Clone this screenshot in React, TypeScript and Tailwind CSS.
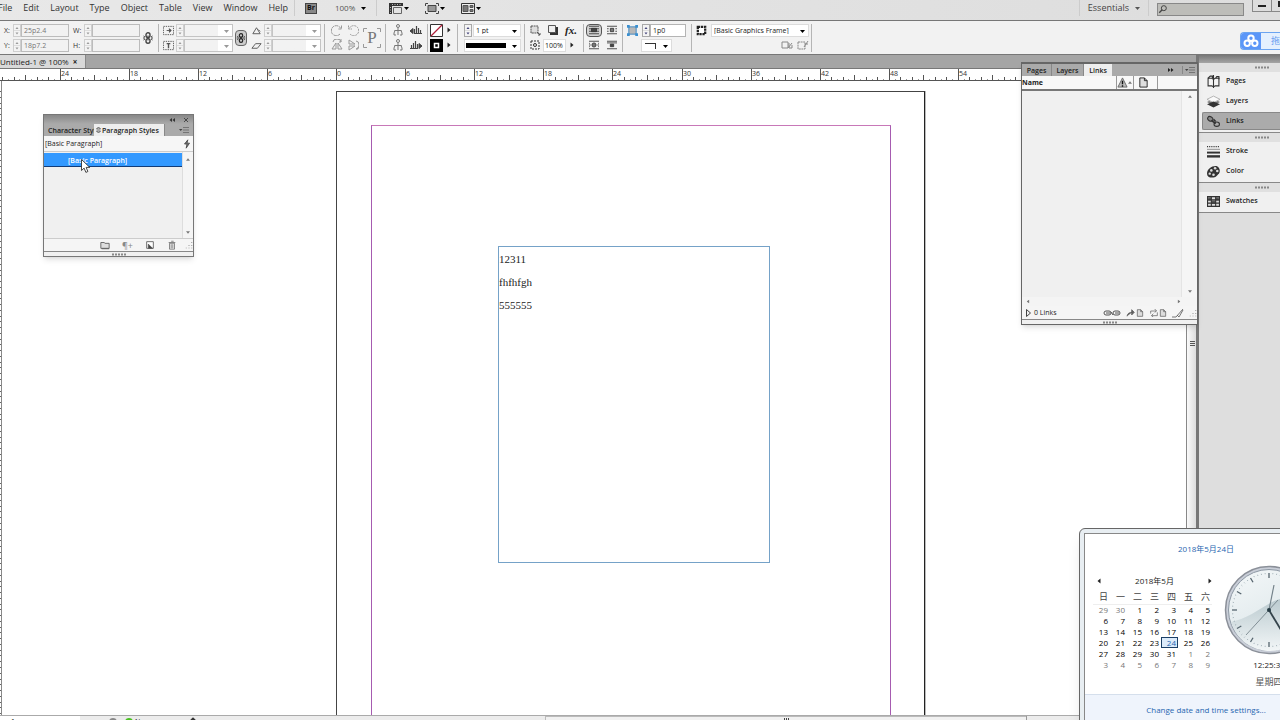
import React from "react";

const ui = "font-['Open_Sans','Noto_Sans_CJK_SC',sans-serif]";

type IconProps = { className?: string; children: React.ReactNode };

const Icon: React.FC<IconProps> = ({ className = "size-3", children }) => (
  <svg viewBox="0 0 12 12" fill="none" stroke="currentColor" className={`shrink-0 ${className}`} aria-hidden="true">
    {children}
  </svg>
);

const Caret = ({ className = "text-black" }: { className?: string }) => (
  <svg viewBox="0 0 5 3" className={`h-[3px] w-[5px] shrink-0 ${className}`} fill="currentColor" aria-hidden="true">
    <path d="M0 0h5L2.500 3z" />
  </svg>
);

const RightCaret = () => (
  <svg viewBox="0 0 4 6" className="h-1.5 w-1 shrink-0" fill="#222" aria-hidden="true">
    <path d="M0.5 0.5v5L3.5 3z" />
  </svg>
);

const Spinner = ({ label, active }: { label: string; active?: boolean }) => (
  <button
    type="button"
    aria-label={label}
    className={`flex h-[13px] w-2 shrink-0 items-center justify-center border bg-[#f4f4f4] ${
      active ? "border-[#a8a8a8] text-[#44447a]" : "border-[#cfcfcf] text-[#999]"
    }`}
  >
    <svg viewBox="0 0 6 11" className="h-[11px] w-1.5" fill="currentColor">
      <path d="M1.5 4L3 2l1.5 2zM1.5 7.5h3L3 9.5z" />
      <path d="M0 5.5h6" stroke="#ccc" strokeWidth=".6" />
    </svg>
  </button>
);

type FieldProps = { label: string; value?: string; className?: string; active?: boolean };

const Field = ({ label, value = "", className = "w-12", active }: FieldProps) => (
  <input
    aria-label={label}
    defaultValue={value}
    className={`h-[13px] min-w-0 shrink-0 border px-0.5 text-[7px] leading-none ${
      active ? "border-[#b4b4b4] bg-white text-[#222]" : "border-[#bcbcbc] bg-[#f2f2f2] text-[#777]"
    } ${className}`}
  />
);

type ComboProps = { label: string; options?: string[]; className?: string; dim?: boolean; children?: React.ReactNode };

const Combo: React.FC<ComboProps> = ({ label, options = [""], className = "w-12", dim, children }) => (
  <div className={`relative h-[13px] shrink-0 ${className}`}>
    <select
      aria-label={label}
      className={`block size-full appearance-none border px-0.5 text-[7px] leading-none ${
        dim ? "border-[#c4c4c4] bg-linear-to-r from-[#f2f2f2] from-70% to-white to-70%" : "border-[#dcdcdc] bg-white text-[#222]"
      }`}
    >
      {options.map((o) => (
        <option key={o}>{o}</option>
      ))}
    </select>
    {children}
    <span className="pointer-events-none absolute inset-y-0 right-1 flex items-center pt-0.5">
      <Caret className={dim ? "text-[#999]" : "text-black"} />
    </span>
  </div>
);

const Section: React.FC<{ className: string; children: React.ReactNode }> = ({ className, children }) => (
  <div className={`flex h-7 shrink-0 items-center border-r border-[#b5b5b5] ${className}`}>{children}</div>
);

const Stack: React.FC<{ className?: string; children: React.ReactNode }> = ({ className = "", children }) => (
  <div className={`flex flex-col gap-0.5 ${className}`}>{children}</div>
);

const Row: React.FC<{ className?: string; children: React.ReactNode }> = ({ className = "", children }) => (
  <div className={`flex h-[13px] items-center ${className}`}>{children}</div>
);

const ToolButton: React.FC<{ label: string; className?: string; children: React.ReactNode }> = ({
  label,
  className = "text-[#555]",
  children,
}) => (
  <button type="button" aria-label={label} className={`flex shrink-0 items-center justify-center ${className}`}>
    {children}
  </button>
);

const Grip = () => (
  <svg viewBox="0 0 14 3" className="h-[3px] w-3.5" aria-hidden="true">
    <path d="M0 1.5h14" stroke="#888" strokeWidth="2" strokeDasharray="2 1" />
  </svg>
);

const MenuLines = () => (
  <svg viewBox="0 0 10 8" className="h-2 w-2.5" fill="#444" aria-hidden="true">
    <path d="M0 3h3.5L1.7 5z" />
    <path d="M4 1.5h6M4 4h6M4 6.5h6" stroke="#666" strokeWidth=".8" />
  </svg>
);

const ChainIcon = ({ className }: { className?: string }) => (
  <Icon className={className}>
    <rect x="4" y="0.8" width="4" height="4.6" rx="2" strokeWidth="1.4" />
    <rect x="4" y="6.6" width="4" height="4.6" rx="2" strokeWidth="1.4" />
    <path d="M6 3.5v5M1.5 4l1.5 1M10.5 4L9 5M1 6h2M11 6H9M1.5 8L3 7M10.5 8L9 7" />
  </Icon>
);

const DocIcon = ({ className }: { className?: string }) => (
  <Icon className={className}>
    <path d="M2 1h5l3 3v7H2z" fill="#ddd" />
    <path d="M7 1v3h3" />
  </Icon>
);

const menus = ["File", "Edit", "Layout", "Type", "Object", "Table", "View", "Window", "Help"];

const MenuBar = () => (
  <header className="flex h-[21px] shrink-0 items-start justify-between border-b border-[#777] bg-linear-to-r from-[#e8e8e8] to-[#dddddd] text-[9px] leading-4 text-[#333]">
    <div className="flex items-center">
      <nav className="-ml-0.5 flex gap-[11px]">
        {menus.map((m) => (
          <button key={m} type="button">
            {m}
          </button>
        ))}
      </nav>
      <div className="ml-1.5 flex h-4 items-center gap-2.5 border-l border-[#ccc] pl-2.5">
        <button
          type="button"
          className="flex h-[11px] w-3 items-center justify-center border border-[#444] bg-[#888] text-[7px] font-bold text-[#111]"
        >
          Br
        </button>
        <button type="button" className="ml-2 flex items-center gap-1.5 text-[8px] text-[#555]">
          100% <Caret />
        </button>
      </div>
      <div className="ml-2.5 flex h-4 items-center gap-4 border-l border-[#ccc] pl-3 text-[#333]">
        <ToolButton label="View Options" className="gap-px">
          <svg viewBox="0 0 14 11" className="h-[11px] w-3.5">
            <path d="M0 0h14v3H3v8H0z" fill="#333" />
            <path d="M3 1.500h10M1.500 4v7" stroke="#bbb" strokeDasharray="1 1.500" />
            <path d="M4.500 4.500h8v6h-8z" fill="#e4e4e4" stroke="#666" />
          </svg>
          <Caret />
        </ToolButton>
        <ToolButton label="Screen Mode" className="gap-px">
          <svg viewBox="0 0 14 11" className="h-[11px] w-3.5" fill="none" stroke="#444">
            <path d="M3 2.500h8v6H3z" fill="#999" />
            <path d="M.5 3V.5H3M11 .5h2.500V3M.5 8v2.500H3M11 10.500h2.500V8" />
          </svg>
          <Caret />
        </ToolButton>
        <ToolButton label="Arrange Documents" className="gap-px">
          <svg viewBox="0 0 14 11" className="h-[11px] w-3.5" stroke="#333">
            <path d="M.5.5h13v10H.5z" fill="#eee" />
            <path d="M2 2.500h5v6H2zM9 2.500h3v2H9zM9 6.500h3v2H9z" fill="#777" stroke="#555" />
          </svg>
          <Caret />
        </ToolButton>
      </div>
    </div>
    <div className="flex items-center">
      <button type="button" className="flex h-4 items-center gap-1.5 border-x border-[#ccc] px-2 text-[#444]">
        Essentials <Caret className="text-[#555]" />
      </button>
      <label className="mt-0.5 ml-2 flex h-[13px] w-[87px] items-center border border-[#888] bg-[#bdbdb9] text-[#444]">
        <Icon className="size-2.5">
          <circle cx="7" cy="5" r="3" strokeWidth="1.2" />
          <path d="M5 7L1.500 10.500" strokeWidth="1.600" />
        </Icon>
        <input aria-label="Search" className="w-full min-w-0" />
      </label>
      <div className="-mt-2 ml-2 flex text-[#222]">
        <button type="button" aria-label="Minimize" className="flex h-4 w-5 items-end justify-center border border-[#888] pb-1">
          <span className="h-0.5 w-2 bg-[#222]" />
        </button>
        <button type="button" aria-label="Maximize" className="flex h-4 w-2 items-end border-b border-[#888] pb-1 pl-1.5">
          <span className="h-1.5 w-0.5 bg-[#222]" />
        </button>
      </div>
    </div>
  </header>
);

const Person = () => (
  <Icon className="size-3">
    <circle cx="6" cy="2" r="1.500" />
    <path d="M6 4v7M2.500 6.500h7M2 9v2h2M10 9v2H8M3 6.500L2 9M9 6.500l1 2.500" />
  </Icon>
);

const Blocks = ({ flip }: { flip?: boolean }) => (
  <Icon className={flip ? "size-3 -scale-x-100" : "size-3"}>
    <path d="M0 7l3-2.500v5z" fill="currentColor" />
    <path d="M4.500 5v5M6.500 2v8M8.500 4v6M10.500 6v4M4 9.500h8" strokeWidth="1.200" />
  </Icon>
);

const ControlBar = () => (
  <section className="flex h-[34px] shrink-0 items-center justify-between border-b border-[#777] bg-[#f2f2f2] text-[7px] leading-none text-[#333]">
    <div className="flex items-center">
      <Section className="w-[159px] pl-1">
        <Stack>
          {[
            ["X:", "25p2.4", "W:"],
            ["Y:", "18p7.2", "H:"],
          ].map(([a, v, b]) => (
            <Row key={a}>
              <span className="w-[9px]">{a}</span>
              <Spinner label={`${a} step`} />
              <Field label={a} value={v} />
              <span className="ml-1 w-[11px]">{b}</span>
              <Spinner label={`${b} step`} />
              <Field label={b} />
            </Row>
          ))}
        </Stack>
        <ToolButton label="Constrain proportions" className="ml-0.5 text-[#444]">
          <ChainIcon />
        </ToolButton>
      </Section>
      <Section className="w-[166px] pl-1">
        <Stack>
          {["Scale X", "Scale Y"].map((s, i) => (
            <Row key={s}>
              <Icon className="size-[11px] text-[#555]">
                <path d="M.5 1.500h11v9H.5z" strokeDasharray="1.500 1" />
                {i === 0 ? <path d="M4 6h4M7 4v4l2-2z" fill="#444" /> : <path d="M4 4h4M6 4v5" strokeWidth="1.500" />}
              </Icon>
              <span className="w-0.5" />
              <Spinner label={`${s} step`} />
              <Combo label={s} dim className="w-[49px]" />
            </Row>
          ))}
        </Stack>
        <ToolButton label="Link scaling" className="ml-0.5 h-4 w-3 rounded-sm border border-[#666] bg-[#ccc] text-[#222]">
          <ChainIcon className="size-2.5" />
        </ToolButton>
        <Stack className="ml-1">
          {["Rotation", "Shear"].map((s, i) => (
            <Row key={s}>
              <Icon className="size-[11px] text-[#555]">
                {i === 0 ? <path d="M2 9.500h8L6 3M6 3L2 9.500M8 5l2 2" /> : <path d="M1 9l4-5h6L7 9z" />}
              </Icon>
              <span className="w-0.5" />
              <Spinner label={`${s} step`} />
              <Combo label={s} dim className="w-[49px]" />
            </Row>
          ))}
        </Stack>
      </Section>
      <Section className="w-[61px] gap-1 pl-1.5 text-[#999]">
        <Stack>
          <ToolButton label="Rotate 90 clockwise" className="h-[13px]">
            <Icon>
              <path d="M9 10a5 5 0 1 1 1-5M10.500 1.500V5H7" strokeDasharray="3 .6" />
            </Icon>
          </ToolButton>
          <ToolButton label="Flip horizontal" className="h-[13px]">
            <Icon>
              <path d="M1 10l4-6v6zM7 4l4 6H7zM2 3a4 3 0 0 1 8 0M10 0v3H8" />
            </Icon>
          </ToolButton>
        </Stack>
        <Stack>
          <ToolButton label="Rotate 90 counter-clockwise" className="h-[13px]">
            <Icon>
              <path d="M3 10a5 5 0 1 0-1-5M1.500 1.500V5H5" strokeDasharray="2 .8" />
            </Icon>
          </ToolButton>
          <ToolButton label="Flip vertical" className="h-[13px]">
            <Icon>
              <path d="M2 1l6 4H2zM2 7h6l-6 4zM9 2a3 4 0 0 1 0 8M9 10h2V8" />
            </Icon>
          </ToolButton>
        </Stack>
        <div className="relative flex h-5 w-[18px] items-center justify-center font-['Liberation_Serif',serif] text-[17px] text-[#777]">
          <svg viewBox="0 0 18 20" className="absolute inset-0" fill="none" stroke="#999">
            <path d="M.5 4V.5H4M14 .5h3.500V4M.5 16v3.500H4M14 19.500h3.500V16" />
          </svg>
          P
        </div>
      </Section>
      <Section className="w-[42px] gap-1.5 pl-1.5 text-[#777]">
        <Stack>
          <ToolButton label="Select container" className="h-[13px]"><Person /></ToolButton>
          <ToolButton label="Select content" className="h-[13px]"><Person /></ToolButton>
        </Stack>
        <Stack className="text-[#444]">
          <ToolButton label="Select previous" className="h-[13px]"><Blocks /></ToolButton>
          <ToolButton label="Select next" className="h-[13px]"><Blocks flip /></ToolButton>
        </Stack>
      </Section>
      <Section className="w-[30px] pl-0.5">
        <Stack>
          <Row className="gap-1">
            <ToolButton label="Fill">
              <svg viewBox="0 0 13 13" className="size-[13px]">
                <path d="M.5.5h12v12H.5z" fill="#fff" stroke="#333" />
                <path d="M1 12L12 1" stroke="#b0203a" strokeWidth="1.300" />
              </svg>
            </ToolButton>
            <RightCaret />
          </Row>
          <Row className="gap-1">
            <ToolButton label="Stroke">
              <svg viewBox="0 0 13 13" className="size-[13px]">
                <path d="M0 0h13v13H0z" />
                <path d="M4.500 4.500h4v4h-4z" stroke="#fff" strokeWidth="1.500" />
              </svg>
            </ToolButton>
            <RightCaret />
          </Row>
        </Stack>
      </Section>
      <Section className="w-[67px] pl-1.5">
        <Stack>
          <Row className="gap-px">
            <Spinner label="Stroke weight step" active />
            <Combo label="Stroke weight" options={["1 pt"]} />
          </Row>
          <Combo label="Stroke type" className="w-[57px]">
            <span className="pointer-events-none absolute top-1 left-0.5 h-[5px] w-10 bg-black" />
          </Combo>
        </Stack>
      </Section>
      <Section className="w-[59px] pl-1">
        <Stack>
          <Row className="gap-1.5">
            <ToolButton label="Apply effect to object">
              <Icon><path d="M2 2h7v7H2z" fill="#ddd" strokeDasharray="2 .6" /><path d="M8 8l3 3M11 9v2H9" /></Icon>
            </ToolButton>
            <ToolButton label="Drop shadow">
              <Icon><path d="M3 3h8v8H3z" fill="#333" stroke="none" /><path d="M1.500 1.500h7v7h-7z" fill="#eee" /></Icon>
            </ToolButton>
            <button type="button" className="font-['Liberation_Serif',serif] text-[11px] font-bold text-[#222] italic">fx.</button>
          </Row>
          <Row className="gap-0.5">
            <Icon><path d="M2 2h8v8H2z" strokeDasharray="2 1" /><circle cx="6" cy="6" r="1.500" /></Icon>
            <input aria-label="Opacity" defaultValue="100%" className="h-[13px] w-[23px] border border-[#ddd] bg-white px-px text-[7px] text-[#222]" />
            <span className="ml-0.5"><RightCaret /></span>
          </Row>
        </Stack>
      </Section>
      <Section className="w-[39px] gap-1 pl-0.5 text-[#333]">
        <Stack>
          <ToolButton label="No text wrap" className="h-[13px] w-4 rounded-sm border border-[#555] bg-[#d2d2d2]">
            <Icon className="h-2.5 w-3"><path d="M0 1.500h12M0 10.500h12M0 7.500h12M0 4.500h12" /><path d="M3 4h6v4H3z" fill="#444" /></Icon>
          </ToolButton>
          <ToolButton label="Wrap around shape" className="h-[13px] w-4">
            <Icon className="h-2.5 w-3"><path d="M0 1.500h12M0 10.500h12M0 6h2M10 6h2M0 4h1M11 4h1M0 8h1M11 8h1" /><circle cx="6" cy="6" r="2.500" fill="#777" /></Icon>
          </ToolButton>
        </Stack>
        <Stack>
          <ToolButton label="Wrap around bounding box" className="h-[13px]">
            <Icon className="h-2.5 w-3"><path d="M0 1.500h12M0 10.500h12M0 4.500h2M10 4.500h2M0 7.500h2M10 7.500h2" /><path d="M4 4h4v4H4z" fill="#777" /></Icon>
          </ToolButton>
          <ToolButton label="Jump object" className="h-[13px]">
            <Icon className="h-2.5 w-3"><path d="M0 1.500h12M0 3.500h12M0 10.500h12" /><path d="M4 5h4v3H4z" fill="#444" /></Icon>
          </ToolButton>
        </Stack>
      </Section>
      <Section className="w-[69px] pl-1">
        <Stack>
          <Row>
            <Icon className="size-[11px]">
              <path d="M2 2h8v8H2z" fill="#b8b8b8" stroke="#3a84c0" />
              <path d="M0 0h3v3H0zM9 0h3v3H9zM0 9h3v3H0zM9 9h3v3H9z" fill="#3a8fd0" stroke="none" />
            </Icon>
            <span className="w-1" />
            <Spinner label="Corner size step" active />
            <Field label="Corner size" value="1p0" active className="w-9" />
          </Row>
          <Combo label="Corner shape" className="ml-3.5 w-[31px]">
            <span className="pointer-events-none absolute top-1 left-1 h-1.5 w-[11px] border-t border-r border-[#333]" />
          </Combo>
        </Stack>
      </Section>
      <Section className="w-[120px] pl-1">
        <Stack>
          <Row className="gap-1">
            <Icon className="size-[11px] text-[#222]"><path d="M2 2h8v8H2z" fill="#fff" strokeWidth="2.500" strokeDasharray="2.500 .8" /></Icon>
            <Combo label="Object style" options={["[Basic Graphics Frame]"]} className="w-[98px]" />
          </Row>
          <Row className="justify-end gap-1 text-[#888]">
            <Icon><path d="M1 3h6v6H1zM7 9l4-5M8 4v5h3V6" /></Icon>
            <Icon><path d="M1 3h7v7H1z" strokeDasharray="2 .6" /><path d="M7 8l4-6M8 5h3" /></Icon>
          </Row>
        </Stack>
      </Section>
    </div>
    <button type="button" className="mt-1.5 flex h-[18px] w-10 shrink-0 items-stretch overflow-hidden rounded-l-sm border border-r-0 border-[#6ba4f0] bg-[#e4f0fe] text-[9px] text-[#6a9ef0]">
      <span className="flex w-5 shrink-0 items-center justify-center bg-[#5b96f8]">
        <svg viewBox="0 0 16 14" className="h-3.5 w-4" fill="none" stroke="#fff" strokeWidth="2">
          <circle cx="8" cy="4.200" r="2.700" />
          <circle cx="4.200" cy="9.300" r="2.700" />
          <circle cx="11.800" cy="9.300" r="2.700" />
        </svg>
      </span>
      <span className="ml-2.5 self-center whitespace-nowrap">拖拽</span>
    </button>
  </section>
);

const ORIGIN = 336;
const PICA6 = 69.1;

const HorizontalRuler = () => (
  <svg className="h-3 w-full shrink-0 border-b border-[#555] bg-white" aria-label="Horizontal ruler">
    {Array.from({ length: 230 }, (_, i) => {
      const n = i - 60;
      const x = Math.round(ORIGIN + (n * PICA6) / 12) + 0.5;
      const top = n % 12 === 0 ? 0 : n % 6 === 0 ? 6 : n % 2 === 0 ? 8 : 10;
      return <path key={i} d={`M${x} ${top}V12`} stroke={n % 2 === 0 ? "#555" : "#999"} />;
    })}
    {Array.from({ length: 14 }, (_, i) => i - 4).map((n) => (
      <text key={n} x={Math.round(ORIGIN + n * PICA6) + 1} y="7" fontSize="7" fill="#333">
        {Math.abs(n * 6)}
      </text>
    ))}
  </svg>
);

const VerticalRuler = () => (
  <svg className="h-full w-0.5 shrink-0 bg-white" aria-label="Vertical ruler">
    <path d="M1.500 0V1200" stroke="#888" />
    {Array.from({ length: 110 }, (_, i) => (
      <path key={i} d={`M0 ${10.5 + Math.round(i * 5.76)}h1`} stroke="#666" />
    ))}
  </svg>
);

const storyLines = ["12311", "fhfhfgh", "555555"];

const Canvas = () => (
  <main className="relative min-w-0 flex-1 overflow-hidden bg-white">
    {/* the page, its margins and one text frame */}
    <div className="absolute top-2.5 left-[334px] h-[760px] w-[589px] border border-[#444] border-r-[#222] shadow-[1px_0_0_#bbb]">
      <div className="absolute top-[33px] left-[34px] h-[690px] w-[520px] border border-[#a65bb0] border-t-[#c878b8]" />
      <div className="absolute top-[154px] left-[161px] h-[317px] w-[272px] border border-[#75a2c8] pt-px font-['Liberation_Serif',serif] text-[11px] leading-[23px] text-[#222]">
        {storyLines.map((l) => (
          <p key={l}>{l}</p>
        ))}
      </div>
    </div>
  </main>
);

const StatusBar = () => (
  <footer className="flex h-[5px] shrink-0 overflow-hidden border-t border-[#aaa] bg-[#ececec] text-[7px] leading-none">
    <div className="h-full w-20 bg-white pt-0.5 pl-[11px]">1</div>
    <div className="flex w-[107px] pt-0.5 pl-[29px] text-[#222]">
      <span className="size-2 shrink-0 rounded-full bg-[#888]" />
      <span className="ml-2 size-2 shrink-0 rounded-full bg-[#48c020]" />
      <span className="ml-0.5">No errors</span>
    </div>
    <div className="w-[358px] pt-0.5 pl-1">
      <div className="size-1 rotate-45 bg-[#333]" />
    </div>
    <div className="flex flex-1 justify-center border-t border-l border-[#bbb] bg-[#f1f1f1]">
      <svg viewBox="0 0 5 3" className="mt-px h-[3px] w-[5px]" stroke="#444">
        <path d="M.5 0v3M2.500 0v3M4.500 0v3" />
      </svg>
    </div>
    <div className="w-[170px] border-l border-[#999]" />
  </footer>
);

const DocumentArea = () => (
  <div className="flex min-w-0 flex-1 flex-col">
    <div className="flex h-3.5 shrink-0 items-stretch border-b border-[#777] bg-[#a5a5a5]">
      <div className="flex w-[86px] items-center gap-1 border-r border-[#888] bg-[#d9d9d9] text-[8px] leading-none text-[#222]">
        <span className="whitespace-nowrap">Untitled-1 @ 100%</span>
        <button type="button" aria-label="Close document" className="font-bold">
          ×
        </button>
      </div>
    </div>
    <HorizontalRuler />
    <div className="flex min-h-0 flex-1">
      <VerticalRuler />
      <Canvas />
      <div className="flex w-2.5 items-center justify-center border-l border-[#888] bg-linear-to-r from-[#fafafa] to-[#ddd] pb-27">
        <svg viewBox="0 0 6 6" className="size-1.5" stroke="#555">
          <path d="M1 .5h5M1 2.500h5M1 4.500h5" />
        </svg>
      </div>
    </div>
    <StatusBar />
  </div>
);

const dockIcons: Record<string, React.ReactNode> = {
  Pages: (
    <>
      <path d="M1 3h3.500L6 4l1.500-1H11v7H7.500L6 11l-1.500-1H1z" fill="#f4f4f4" />
      <path d="M6 0v12M1 3l2-2h2v2M8 3l1-1.500h2V4" />
    </>
  ),
  Layers: (
    <>
      <path d="M0 4l6-3 6 3-6 3z" fill="#fafafa" stroke="#aaa" strokeWidth=".8" />
      <path d="M0 6.500l6 3 6-3-2-1-4 2-4-2z" fill="#777" stroke="none" />
      <path d="M0 8.500l6 3 6-3L6 6z" fill="#333" stroke="none" />
    </>
  ),
  Links: (
    <>
      <ellipse cx="3" cy="3.500" rx="2.500" ry="2" transform="rotate(30 3 3.500)" fill="#888" />
      <ellipse cx="9" cy="8.500" rx="2.500" ry="2" />
      <path d="M4 5l4 3M6 4l2 2" strokeWidth="1.500" />
    </>
  ),
  Stroke: (
    <>
      <path d="M0 1.500h12" strokeDasharray="1 1" />
      <path d="M0 4h12" stroke="#999" />
      <path d="M0 7h12" strokeWidth="1.800" />
      <path d="M0 10.500h12" strokeWidth="2.200" />
    </>
  ),
  Color: (
    <>
      <path d="M8 1C4 1 0 4 0 8c0 3 3 4 6 3.500 3-.5 3-2 5-3.500C13 5 11 1 8 1z" fill="#333" stroke="none" />
      <g fill="#ddd" stroke="none">
        <circle cx="7.500" cy="3" r="1.200" />
        <circle cx="4" cy="5" r="1.200" />
        <circle cx="2.500" cy="8" r="1.100" />
        <circle cx="9.500" cy="5.500" r="1.200" />
        <circle cx="6" cy="9" r="1.200" />
      </g>
    </>
  ),
  Swatches: (
    <>
      <path d="M.5 1.500h11v9H.5z" fill="#ddd" />
      <path d="M1 2h3v3H1zM4 5h4v3H4zM8 2h3v3H8z" fill="#555" stroke="none" />
      <path d="M0 4.500h12M0 7.500h12M4 1v10M8 1v10" />
    </>
  ),
};

const dockGroups = [["Pages", "Layers", "Links"], ["Stroke", "Color"], ["Swatches"]];

const Dock = () => (
  <aside className="flex w-[84px] shrink-0 flex-col border-l-[3px] border-[#777] bg-[#dedede]">
    <div className="h-2 shrink-0 bg-linear-to-b from-[#777] to-[#a5a5a5]" />
    {dockGroups.map((group) => (
      <div key={group[0]} className="border-b border-[#888] bg-[#f0f0f0]">
        <div className="flex h-[9px] items-center justify-center bg-[#e0e0e0] pl-11">
          <Grip />
        </div>
        {group.map((name) => (
          <div key={name} className="h-5 pl-[3px]">
            <button
              type="button"
              className={`flex h-[18px] w-full items-center gap-1.5 border border-r-0 pl-1 text-[7px] font-semibold text-[#222] ${
                name === "Links" ? "rounded-l-xs border-[#888] bg-[#ababab]" : "border-transparent"
              }`}
            >
              <Icon className="size-[13px] text-[#333]">{dockIcons[name]}</Icon>
              {name}
            </button>
          </div>
        ))}
      </div>
    ))}
  </aside>
);

const ScrollArrow = ({ className = "" }: { className?: string }) => (
  <svg viewBox="0 0 6 4" className={`h-[3px] w-1 ${className}`} fill="#777" aria-hidden="true">
    <path d="M0 4h6L3 0z" />
  </svg>
);

const ResizeCorner = ({ className = "" }: { className?: string }) => (
  <Icon className={`size-2 text-[#999] ${className}`}>
    <path d="M10 2v1M10 6v1M6 6v1M10 10v1M6 10v1M2 10v1" strokeWidth="2" />
  </Icon>
);

const ParagraphStylesPanel = () => (
  <section className="absolute top-[114px] left-[43px] flex w-[151px] flex-col border border-[#777] bg-[#f0f0f0] text-[7px] leading-none text-[#222] shadow-md">
    <div className="flex h-[9px] items-center justify-end gap-2 bg-linear-to-b from-[#888] to-[#aaa] pr-1">
      <svg viewBox="0 0 6 4" className="h-1 w-1.5" fill="#333"><path d="M3 0v4L.5 2zM6 0v4L3.500 2z" /></svg>
      <button type="button" aria-label="Close panel">
        <svg viewBox="0 0 6 6" className="size-1.5" stroke="#333" strokeWidth=".8"><path d="M1 1l4 4M5 1L1 5" /></svg>
      </button>
    </div>
    <div className="flex h-3 items-stretch bg-[#aaa] font-semibold">
      <button type="button" className="w-[50px] overflow-hidden pl-1 whitespace-nowrap">Character Styles</button>
      <button type="button" className="flex w-[71px] items-center gap-px border-r border-[#888] bg-[#eee] pl-0.5 whitespace-nowrap">
        <svg viewBox="0 0 5 8" className="h-2 w-[5px]" fill="none" stroke="#444" strokeWidth=".8"><path d="M.5 3l2-2 2 2zM.5 5l2 2 2-2z" /></svg>
        Paragraph Styles
      </button>
      <button type="button" aria-label="Panel menu" className="ml-auto pr-1"><MenuLines /></button>
    </div>
    <div className="flex h-4 items-center justify-between border-b border-[#ccc] bg-[#f6f6f6] pr-px pl-px">
      [Basic Paragraph]
      <Icon className="size-2.5 text-[#444]"><path d="M7 1L3 6h3l-1 5 4-6H6z" fill="#777" strokeWidth="1" /></Icon>
    </div>
    <div className="flex h-[86px]">
      <ul className="flex-1 pt-px">
        <li className="flex h-3.5 items-center border-b border-[#123c78] bg-[#3399ff] pt-px pl-6 font-semibold text-white">[Basic Paragraph]</li>
      </ul>
      <div className="flex w-[11px] flex-col items-center justify-between border-l border-[#ddd] bg-[#f5f5f5] pt-1.5 pb-1">
        <ScrollArrow />
        <ScrollArrow className="rotate-180" />
      </div>
    </div>
    <div className="flex h-[13px] items-center justify-end gap-3 border-t border-[#ccc] bg-[#f5f5f5] text-[#444]">
      <ToolButton label="New group"><Icon className="size-2.5"><path d="M1 3h4l1 1h5v6H1zM2 10.500h9" fill="#ddd" /></Icon></ToolButton>
      <ToolButton label="Clear overrides" className="text-[#888]"><span className="text-[9px]">¶+</span></ToolButton>
      <ToolButton label="New style"><Icon className="size-2.5"><path d="M2 2h8v8H2z" fill="#fff" /><path d="M4 10V5l5 5z" fill="#444" /></Icon></ToolButton>
      <ToolButton label="Delete style"><Icon className="size-2.5"><path d="M3 4h6v7H3zM2 3h8M5 1.500h3M5 5v5M7 5v5" strokeWidth=".8" /></Icon></ToolButton>
      <ResizeCorner className="-ml-1" />
    </div>
    <div className="flex h-[5px] items-center justify-center border-t border-[#888]"><Grip /></div>
  </section>
);

const LinksPanel = () => (
  <section className="absolute top-[62px] right-[82px] flex w-[177px] flex-col border border-t-2 border-[#666] bg-[#f0f0f0] text-[7px] leading-none text-[#222] shadow-md">
    <div className="flex h-3 items-stretch bg-[#aaa] font-semibold">
      <button type="button" className="w-[30px] border-r border-[#888]">Pages</button>
      <button type="button" className="w-8 border-r border-[#888]">Layers</button>
      <button type="button" className="w-7 bg-[#eee]">Links</button>
      <span className="ml-auto flex items-center gap-2 pr-0.5">
        <svg viewBox="0 0 6 4" className="h-1 w-1.5" fill="#222"><path d="M0 0v4l2.500-2zM3 0v4l2.500-2z" /></svg>
        <button type="button" aria-label="Panel menu" className="border-l border-[#888] pl-0.5"><MenuLines /></button>
      </span>
    </div>
    <table className="w-full table-fixed border-b-2 border-[#777] bg-[#f8f8f8] text-left">
      <thead>
        <tr className="h-3.5">
          <th className="w-[94px] border-r border-[#999] p-0 font-bold">Name</th>
          <th className="w-[17px] border-r border-[#999] p-0" aria-label="Status">
            <span className="flex items-center">
              <Icon className="size-[11px]"><path d="M6 1l5 10H1z" fill="#bbb" stroke="#666" /><path d="M6 4v4M6 9v1.500" stroke="#111" strokeWidth="1.500" /></Icon>
              <ScrollArrow />
            </span>
          </th>
          <th className="w-6 border-r border-[#999] p-0 pl-1" aria-label="Page"><DocIcon className="size-[11px]" /></th>
          <th className="p-0" aria-label="Info" />
        </tr>
      </thead>
    </table>
    <div className="flex h-[206px]">
      <div className="flex-1" />
      <div className="flex w-4 flex-col items-center justify-between border-l border-[#e4e4e4] bg-[#f5f5f5] pt-1 pb-1">
        <ScrollArrow />
        <ScrollArrow className="rotate-180" />
      </div>
    </div>
    <div className="flex h-[9px] items-center justify-between bg-[#f4f4f4] pr-4 pl-1">
      <ScrollArrow className="-rotate-90" />
      <ScrollArrow className="rotate-90" />
    </div>
    <div className="flex h-[13px] items-center bg-[#f5f5f5] pl-1 text-[#666]">
      <svg viewBox="0 0 5 8" className="h-2 w-[5px]" fill="#eee" stroke="#444"><path d="M.5.500v7l4-3.500z" /></svg>
      <span className="ml-[3px] text-[#222]">0 Links</span>
      <span className="ml-auto flex items-center gap-[5px]">
        <ToolButton label="Relink">
          <svg viewBox="0 0 18 8" className="h-2 w-[18px]" fill="none" stroke="currentColor"><rect x="1" y="2" width="7" height="4" rx="2" /><rect x="10" y="2" width="7" height="4" rx="2" /><path d="M3 4h4M8 3l2 3M12 4h4" /></svg>
        </ToolButton>
        <ToolButton label="Go to link">
          <Icon className="h-2 w-2.5"><path d="M0 11c1-5 4-6 8-6M7 1l4 4-4 4z" fill="#666" /></Icon>
          <DocIcon className="size-2" />
        </ToolButton>
        <ToolButton label="Update link">
          <Icon className="h-2 w-2.5"><path d="M1 7V3h8M7 0l3 3-3 2M11 5v5H3M5 7l-3 3 3 2" /></Icon>
          <DocIcon className="size-2" />
        </ToolButton>
        <ToolButton label="Edit original">
          <Icon className="size-3"><path d="M0 10h4M4 10L11 2M5 8l2 2 4-7" strokeWidth=".8" /></Icon>
        </ToolButton>
        <ResizeCorner />
      </span>
    </div>
    <div className="flex h-[5px] items-center justify-center border-t border-[#888]"><Grip /></div>
  </section>
);

const weekdays = ["日", "一", "二", "三", "四", "五", "六"];

// six weeks starting on 29 April
const weeks = Array.from({ length: 6 }, (_, w) =>
  Array.from({ length: 7 }, (_, d) => {
    const n = w * 7 + d - 1;
    return { day: n < 1 ? n + 30 : n > 31 ? n - 31 : n, other: n < 1 || n > 31 };
  })
);

const Clock = () => (
  <svg viewBox="0 0 90 90" className="size-[90px] shrink-0" aria-hidden="true">
    <defs>
      <linearGradient id="face" x1="0" y1="0" x2="0.5" y2="1">
        <stop offset="0" stopColor="#f4f8f9" />
        <stop offset="1" stopColor="#dbe5e8" />
      </linearGradient>
      <linearGradient id="shade" x1="0" y1="0" x2="0" y2="1">
        <stop offset="0" stopColor="#b9c9ce" />
        <stop offset="1" stopColor="#f2f6f7" />
      </linearGradient>
    </defs>
    <circle cx="45" cy="45" r="43.500" fill="#c9ced8" stroke="#8b9099" strokeWidth="1.500" />
    <circle cx="45" cy="45" r="40.500" fill="url(#face)" stroke="#8d98a4" />
    <path d="M7 57C22 54 34 45 48 37c14-6 24-6 36-2a40 40 0 0 1-77 22z" fill="url(#shade)" />
    {Array.from({ length: 60 }, (_, i) => (
      <path
        key={i}
        d={i % 5 === 0 ? "M45 8v5" : "M45 8v1"}
        stroke={i % 5 === 0 ? "#56656e" : "#8fa0a8"}
        strokeWidth={i % 5 === 0 ? 1.3 : 0.8}
        transform={`rotate(${i * 6} 45 45)`}
      />
    ))}
    <path d="M45 45L50 20" stroke="#74828a" strokeWidth="1.200" />
    <path d="M45 45l18 30" stroke="#34434b" strokeWidth="1.800" />
    <path d="M22 70L54 35" stroke="#6c7a82" strokeWidth=".8" />
    <circle cx="45" cy="45" r="2" fill="#263b44" />
  </svg>
);

const ClockPopup = () => (
  <section className="absolute -right-[53px] bottom-[-14px] flex h-[206px] w-[254px] rounded-md border border-[#666] bg-[#e8eef2] p-1 shadow-lg">
    <div className="flex flex-1 flex-col border border-[#888] bg-white text-[8px] leading-none text-[#222]">
      <h2 className="pt-2.5 text-center leading-[9px] text-[#1f66b0]">2018年5月24日</h2>
      <div className="mt-3 flex items-start pl-2">
        <div className="mt-3 w-[119px]">
          <div className="flex items-center justify-between pl-1">
            <button type="button" aria-label="Previous month" className="rotate-180"><RightCaret /></button>
            <span>2018年5月</span>
            <button type="button" aria-label="Next month"><RightCaret /></button>
          </div>
          <table className="mt-1 w-full table-fixed border-collapse text-right">
            <thead>
              <tr className="h-[15px]">
                {weekdays.map((d) => (
                  <th key={d} className="border-b border-[#eee] p-0 pr-0.5 text-[9px] font-normal text-[#444]">{d}</th>
                ))}
              </tr>
            </thead>
            <tbody>
              {weeks.map((week, w) => (
                <tr key={w} className="h-[11px]">
                  {week.map(({ day, other }) => (
                    <td
                      key={day}
                      className={`p-0 pr-0.5 ${
                        other
                          ? "text-[#777]"
                          : day === 24
                            ? "bg-[#dcebfa] text-[#1f66b0] outline-1 -outline-offset-1 outline-[#1b3f66]"
                            : "text-black"
                      }`}
                    >
                      {day}
                    </td>
                  ))}
                </tr>
              ))}
            </tbody>
          </table>
        </div>
        <div className="ml-3 flex flex-col items-center text-[9px]">
          <Clock />
          <time className="mt-1.5 text-[8px]">12:25:37</time>
          <span className="mt-2 text-[#555]">星期四</span>
        </div>
      </div>
      <div className="mt-auto flex h-[34px] items-start justify-center border-t border-[#d5dfec] bg-[#eff4fc] pt-2.5">
        <a href="#" className="leading-[10px] text-[#1f66b0]">Change date and time settings...</a>
      </div>
    </div>
  </section>
);

const Cursor = () => (
  <svg viewBox="0 0 10 15" className="absolute top-[159px] left-[81px] h-[15px] w-2.5" aria-hidden="true">
    <path d="M.5.500v11l2.600-2.400 1.800 4.300 2-.9-1.800-4.100h3.700z" fill="#fff" stroke="#333" strokeWidth=".9" />
  </svg>
);

export default function App() {
  return (
    <div className={`relative flex h-screen flex-col overflow-hidden bg-white ${ui}`}>
      <MenuBar />
      <ControlBar />
      <div className="flex min-h-0 flex-1">
        <DocumentArea />
        <Dock />
      </div>
      <ParagraphStylesPanel />
      <LinksPanel />
      <ClockPopup />
      <Cursor />
    </div>
  );
}
